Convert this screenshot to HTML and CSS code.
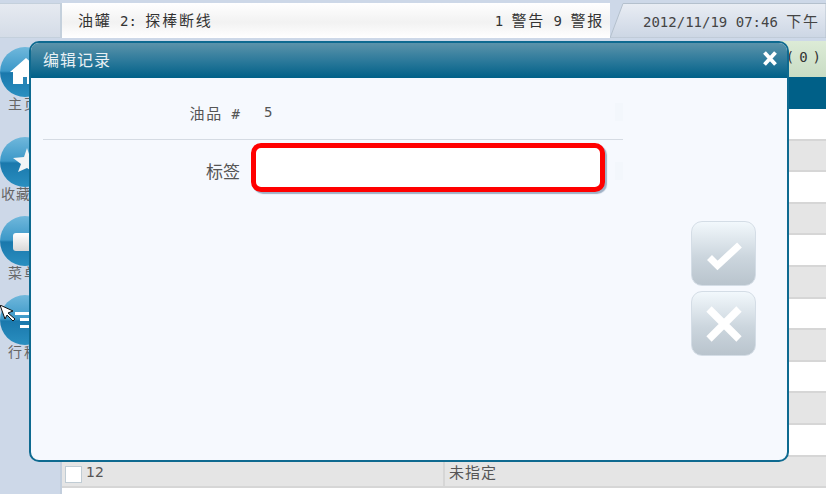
FILE: index.html
```html
<!DOCTYPE html>
<html lang="en">

<head>
    <meta charset="UTF-8">
    <title>编辑记录</title>
    <link rel="stylesheet" href="styles.css">
</head>

<body>
    <div class="topbar">
        <div class="corner"></div>
        <div class="status">
            <span class="mono"><span class="cn">油罐</span> 2: <span class="cn">探棒断线</span></span>
            <span class="mono">1 <span class="cn">警告</span> 9 <span class="cn">警报</span></span>
        </div>
        <div class="clock">
            <svg class="clock-bg" width="216" height="38" viewBox="0 0 216 38">
                <defs>
                    <linearGradient id="tabfill" x1="0" y1="0" x2="0" y2="1">
                        <stop offset="0" stop-color="#e9edf4" />
                        <stop offset="1" stop-color="#ccd6e4" />
                    </linearGradient>
                </defs>
                <path d="M0 38 L13 3.500 H216 V38 Z" fill="url(#tabfill)" stroke="#b4c0cd" />
            </svg>
            <span class="clock-text mono">2012/11/19 07:46 <span class="cn">下午</span></span>
        </div>
    </div>

    <div class="main">
        <div class="sidebar">
            <div class="nav-item">
                <div class="nav-circle">
                    <svg width="50" height="50" viewBox="0 0 50 50">
                        <path d="M10 25 L26 11 L42 25 H39 V37 H13 V25 Z" fill="#fff" />
                        <rect x="23" y="30" width="4" height="7" fill="#2a86b6" />
                    </svg>
                </div>
                <span class="nav-label">主页</span>
            </div>
            <div class="nav-item">
                <div class="nav-circle">
                    <svg width="50" height="50" viewBox="0 0 50 50">
                        <path d="M27 11 L30 20 L41 21 L33 27 L36 37 L27 31 L18 35 L21 27 L13 21 L24 20 Z" fill="#f2f4f6" />
                    </svg>
                </div>
                <span class="nav-label nav-wide">收藏夹</span>
            </div>
            <div class="nav-item">
                <div class="nav-circle">
                    <svg width="50" height="50" viewBox="0 0 50 50">
                        <defs>
                            <linearGradient id="menufill" x1="0" y1="0" x2="0" y2="1">
                                <stop offset="0" stop-color="#fff" />
                                <stop offset="1" stop-color="#d8d8d8" />
                            </linearGradient>
                        </defs>
                        <rect x="13" y="17" width="30" height="18" rx="3" fill="url(#menufill)" />
                    </svg>
                </div>
                <span class="nav-label">菜单</span>
            </div>
            <div class="nav-item">
                <div class="nav-circle">
                    <svg width="50" height="50" viewBox="0 0 50 50">
                        <rect x="15" y="17" width="27" height="3" fill="#fff" />
                        <rect x="20" y="23" width="22" height="3" fill="#fff" />
                        <rect x="20" y="30" width="22" height="3" fill="#fff" />
                    </svg>
                </div>
                <span class="nav-label">行程</span>
            </div>
        </div>

        <div class="content">
            <div class="greenbar"><span class="count">(0)</span></div>
            <div class="tablehead"></div>
            <div class="row"></div>
            <div class="row alt"></div>
            <div class="row"></div>
            <div class="row alt"></div>
            <div class="row"></div>
            <div class="row alt"></div>
            <div class="row"></div>
            <div class="row alt"></div>
            <div class="row"></div>
            <div class="row alt"></div>
            <div class="row"></div>
            <div class="row alt">
                <div class="cell-id"><span class="checkbox"></span>12</div>
                <div class="cell-name">未指定</div>
            </div>
            <div class="row row-last"></div>
        </div>
    </div>

    <div class="dialog">
        <div class="dialog-title">
            <span>编辑记录</span>
            <svg class="dialog-close" width="16" height="15" viewBox="0 0 16 15">
                <path d="M2.500 1.500 L13.500 13.500 M13.500 1.500 L2.500 13.500" stroke="#fff" stroke-width="3.800" />
            </svg>
        </div>
        <div class="dialog-body">
            <div class="form">
                <div class="form-row first">
                    <span class="form-label mono"><span class="cn">油品</span> #</span>
                    <span class="form-value mono">5</span>
                    <span class="form-patch"></span>
                </div>
                <div class="form-row">
                    <span class="form-label big">标签</span>
                    <input class="form-input" type="text">
                    <span class="form-patch shifted"></span>
                </div>
            </div>
            <div class="actions">
                <button class="action-btn">
                    <svg width="44" height="44" viewBox="0 0 44 44">
                        <path d="M7.500 25.500 L15.500 33.500 L37.500 13" fill="none" stroke="#fff" stroke-width="7" />
                    </svg>
                </button>
                <button class="action-btn">
                    <svg width="44" height="44" viewBox="0 0 44 44">
                        <path d="M7 7 L37 37 M37 7 L7 37" fill="none" stroke="#fff" stroke-width="7.500" />
                    </svg>
                </button>
            </div>
        </div>
    </div>

    <svg class="cursor" width="16" height="17" viewBox="0 0 16 17">
        <path d="M0 0 L13 6 L8 8 L15 14 L13 16 L7 10 L5 14 Z" fill="#fff" stroke="#111" stroke-width="1" />
    </svg>
</body>

</html>
```

FILE: styles.css
```css
html,
body {
    margin: 0;
    height: 494px;
    overflow: hidden;
}

body {
    position: relative;
    background-color: #cdd8e8;
    font-family: "Noto Sans CJK SC", "DejaVu Sans", sans-serif;
    font-size: 14px;
    color: #444;
}

.mono {
    font-family: "DejaVu Sans Mono", "Noto Sans CJK SC", monospace;
    font-size: 14px;
    white-space: pre;
}

.cn {
    font-family: "Noto Sans CJK SC", sans-serif;
    font-size: 15px;
    letter-spacing: 1.800px;
}

.topbar {
    display: flex;
    height: 41px;
}

.corner {
    box-sizing: border-box;
    width: 62px;
    height: 35px;
    margin-top: 3px;
    border: 1px solid #c4d0dc;
    border-width: 1px 2px 1px 0;
    background: linear-gradient(#e6eaf1, #d4dce7);
}

.status {
    flex: 1;
    display: flex;
    justify-content: space-between;
    align-items: center;
    box-sizing: border-box;
    height: 35px;
    margin-top: 3px;
    padding: 0 6px 2px 16px;
    background: linear-gradient(#fff, #f2f2f2 55%, #fff);
    color: #333;
}

.clock {
    position: relative;
    width: 216px;
}

.clock-bg {
    display: block;
}

.clock-text {
    position: absolute;
    left: 33px;
    top: 10px;
    color: #444;
}

.main {
    display: flex;
    height: 453px;
}

.sidebar {
    box-sizing: border-box;
    width: 62px;
    padding-top: 6px;
    border-right: 2px solid #c2cedd;
}

.nav-item {
    display: flex;
    flex-direction: column;
    height: 79px;
}

.nav-item:first-child {
    height: 90px;
}

.nav-circle {
    width: 50px;
    height: 50px;
    border-radius: 50%;
    background: linear-gradient(#70b8dc, #3c98c8 48%, #1a78ac 52%, #2a8fc0);
}

.nav-label {
    margin-top: -3px;
    padding-left: 8px;
    line-height: 18px;
    color: #666;
    letter-spacing: 2px;
    white-space: nowrap;
}

.nav-wide {
    padding-left: 1px;
    letter-spacing: 1px;
}

.content {
    flex: 1;
    display: flex;
    flex-direction: column;
    overflow: hidden;
}

.greenbar {
    height: 36px;
    background: linear-gradient(#dcebd6, #c9dcc4);
    text-align: right;
}

.count {
    display: inline-block;
    line-height: 33px;
    font-family: "DejaVu Sans Mono", monospace;
    font-size: 14px;
    letter-spacing: 5px;
    color: #333;
}

.tablehead {
    height: 32px;
    background-color: #006088;
}

.row {
    display: flex;
    flex: none;
    box-sizing: border-box;
    height: 31.6px;
    border-bottom: 2px solid #d6d6d6;
    background-color: #fff;
}

.row-last {
    flex: 1;
    border-bottom: none;
}

.alt {
    background-color: #e5e5e5;
}

.cell-id {
    display: flex;
    align-items: center;
    box-sizing: border-box;
    width: 381px;
    padding: 1px 0 0 3px;
    font-family: "DejaVu Sans", sans-serif;
    font-size: 14px;
    color: #555;
}

.cell-name {
    padding-left: 4px;
    border-left: 2px solid #d6d6d6;
    line-height: 29px;
    font-size: 15px;
    letter-spacing: 1px;
    color: #555;
}

.checkbox {
    box-sizing: border-box;
    width: 17px;
    height: 17px;
    margin: 5px 4px 0 0;
    border: 1px solid #c0ccd4;
    background-color: #fff;
}

.dialog {
    position: absolute;
    left: 29px;
    top: 41px;
    box-sizing: border-box;
    width: 760px;
    height: 421px;
    border: 2px solid #0e6a90;
    border-radius: 10px;
    background-color: #f6f9fe;
    overflow: hidden;
}

.dialog-title {
    display: flex;
    justify-content: space-between;
    align-items: center;
    box-sizing: border-box;
    height: 35px;
    padding: 0 9px 4px 12px;
    background: linear-gradient(#5b93aa, #2d7a9b 50%, #006088);
    color: #e8f0f4;
    font-size: 16px;
    letter-spacing: 1px;
}

.dialog-close {
    display: block;
}

.dialog-body {
    display: flex;
}

.form {
    width: 580px;
    margin-left: 12px;
}

.form-row {
    display: flex;
    align-items: center;
    height: 49px;
    margin-top: 3px;
}

.form-row.first {
    box-sizing: border-box;
    height: 62px;
    margin-top: 0;
    padding-top: 7px;
    border-bottom: 1px solid #d5dbe3;
}

.form-label {
    box-sizing: border-box;
    width: 197px;
    text-align: right;
    color: #555;
}

.form-label.big {
    padding-top: 5px;
    font-size: 17px;
}

.form-value {
    margin-left: 24px;
    color: #555;
}

.form-input {
    box-sizing: border-box;
    width: 354px;
    height: 49px;
    margin-left: 11px;
    border: 5px solid #f00;
    border-radius: 10px;
    box-shadow: 2px 2px 1px #9fb1c6;
    background-color: #fff;
    outline: none;
}

.form-patch {
    width: 8px;
    height: 18px;
    margin-left: auto;
    background-color: #f3f7fc;
}

.form-patch.shifted {
    margin-top: 6px;
}

.actions {
    display: flex;
    flex-direction: column;
    gap: 5px;
    margin-top: 143px;
    margin-left: 68px;
}

.action-btn {
    display: flex;
    justify-content: center;
    align-items: center;
    box-sizing: border-box;
    width: 65px;
    height: 65px;
    padding: 0;
    border: 1px solid #d4dde6;
    border-radius: 11px;
    background: linear-gradient(#f2f8fc, #ccd6de 55%, #b9c4cd);
}

.cursor {
    position: absolute;
    left: 0;
    top: 305px;
}
```
